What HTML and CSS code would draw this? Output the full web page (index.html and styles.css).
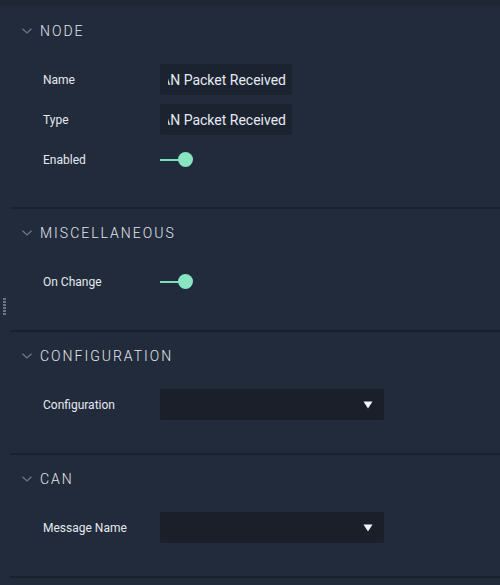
FILE: index.html
```html
<!DOCTYPE html>
<html>
<head>
<meta charset="utf-8">
<link rel="stylesheet" href="styles.css">
</head>
<body>
<div class="topbar"></div>
<div class="panel">
  <div class="gutter"><div class="grip"><i></i><i></i><i></i><i></i><i></i><i></i></div></div>
  <div class="sections">
    <section class="section first">
      <div class="header"><svg class="chev" width="10" height="6" viewBox="0 0 10 6"><path d="M0.5 0.8 L5 5 L9.5 0.8" fill="none" stroke="#717a89" stroke-width="1.2"/></svg><span>NODE</span></div>
      <div class="rows">
        <div class="row"><div class="label">Name</div><div class="input"><div class="clip"><span>CAN Packet Received</span></div></div></div>
        <div class="row"><div class="label">Type</div><div class="input"><div class="clip"><span>CAN Packet Received</span></div></div></div>
        <div class="row"><div class="label">Enabled</div><div class="toggle"><div class="track"></div><div class="knob"></div></div></div>
      </div>
    </section>
    <section class="section">
      <div class="header"><svg class="chev" width="10" height="6" viewBox="0 0 10 6"><path d="M0.5 0.8 L5 5 L9.5 0.8" fill="none" stroke="#717a89" stroke-width="1.2"/></svg><span>MISCELLANEOUS</span></div>
      <div class="rows">
        <div class="row"><div class="label">On Change</div><div class="toggle"><div class="track"></div><div class="knob"></div></div></div>
      </div>
    </section>
    <section class="section">
      <div class="header"><svg class="chev" width="10" height="6" viewBox="0 0 10 6"><path d="M0.5 0.8 L5 5 L9.5 0.8" fill="none" stroke="#717a89" stroke-width="1.2"/></svg><span>CONFIGURATION</span></div>
      <div class="rows">
        <div class="row"><div class="label">Configuration</div><div class="select"><svg width="10" height="8" viewBox="0 0 10 8"><path d="M0.5 0.5 L9.5 0.5 L5 7.5 Z" fill="#f2f4f7"/></svg></div></div>
      </div>
    </section>
    <section class="section">
      <div class="header"><svg class="chev" width="10" height="6" viewBox="0 0 10 6"><path d="M0.5 0.8 L5 5 L9.5 0.8" fill="none" stroke="#717a89" stroke-width="1.2"/></svg><span>CAN</span></div>
      <div class="rows">
        <div class="row"><div class="label">Message Name</div><div class="select"><svg width="10" height="8" viewBox="0 0 10 8"><path d="M0.5 0.5 L9.5 0.5 L5 7.5 Z" fill="#f2f4f7"/></svg></div></div>
      </div>
    </section>
  </div>
</div>
</body>
</html>
```

FILE: styles.css
```css
html, body {
  margin: 0;
  padding: 0;
  background: #222b3b;
  height: 100%;
  overflow: hidden;
  font-family: Roboto, "Liberation Sans", sans-serif;
}
.topbar {
  height: 5px;
  background: #1f2735;
}
.panel {
  display: flex;
}
.gutter {
  width: 10px;
  flex: none;
  display: flex;
  flex-direction: column;
  align-items: center;
  padding-top: 293px;
}
.grip {
  display: flex;
  flex-direction: column;
  gap: 1px;
  width: 3px;
  margin-left: -1px;
}
.grip i {
  display: block;
  height: 2px;
  width: 3px;
  background: #6d7585;
}
.sections {
  flex: 1;
}
.section {
  padding: 14px 0 33px 0;
  border-bottom: 2px solid #1a212d;
}
.section.first {
  padding-top: 16px;
  padding-bottom: 32px;
}
.header {
  height: 20px;
  display: flex;
  align-items: center;
  padding-left: 12px;
  color: #e2e6ed;
  font-size: 14px;
  font-weight: 300;
  letter-spacing: 2px;
}
.chev {
  margin-right: 8px;
  flex: none;
}
.rows {
  margin-top: 23px;
  display: flex;
  flex-direction: column;
  gap: 9px;
}
.row {
  display: flex;
  align-items: center;
  height: 31px;
}
.label {
  width: 117px;
  padding-left: 33px;
  flex: none;
  color: #e4e8ee;
  font-size: 12px;
}
.input {
  width: 132px;
  height: 31px;
  box-sizing: border-box;
  padding: 0 6px 0 8px;
  background: #1c2330;
  border-radius: 2px;
  display: flex;
  align-items: center;
}
.clip {
  flex: 1;
  overflow: hidden;
  white-space: nowrap;
  display: flex;
  justify-content: flex-end;
  color: #e6ebf2;
  font-size: 14px;
}
.clip span {
  flex: none;
}
.toggle {
  position: relative;
  width: 33px;
  height: 15px;
  display: flex;
  align-items: center;
}
.track {
  width: 22px;
  height: 2px;
  background: #7edcb8;
}
.knob {
  position: absolute;
  left: 18px;
  top: 0;
  width: 15px;
  height: 15px;
  border-radius: 50%;
  background: #88e4c1;
}
.select {
  width: 224px;
  height: 31px;
  box-sizing: border-box;
  background: #1b1f29;
  border-radius: 2px;
  display: flex;
  align-items: center;
  justify-content: flex-end;
  padding-right: 11px;
}
```
